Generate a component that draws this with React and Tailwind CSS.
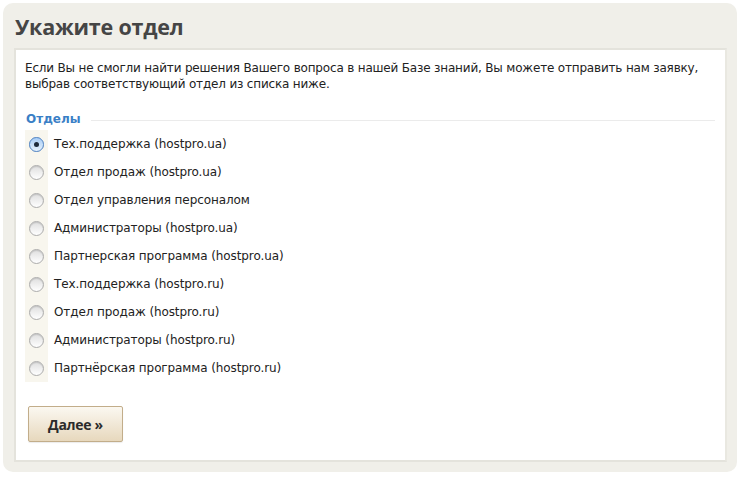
import React from "react";

const items = [
  "Тех.поддержка (hostpro.ua)",
  "Отдел продаж (hostpro.ua)",
  "Отдел управления персоналом",
  "Администраторы (hostpro.ua)",
  "Партнерская программа (hostpro.ua)",
  "Тех.поддержка (hostpro.ru)",
  "Отдел продаж (hostpro.ru)",
  "Администраторы (hostpro.ru)",
  "Партнёрская программа (hostpro.ru)",
];

function Radio({ checked }) {
  return (
    <span className="relative flex h-[15px] w-[15px] items-center justify-center rounded-full border border-[#acacac] bg-gradient-to-b from-[#dedede] to-[#ffffff] shadow-[inset_0_1px_1px_rgba(0,0,0,0.12)]">
      {checked && (
        <span className="absolute inset-[-1px] flex items-center justify-center rounded-full border border-[#5a8fd0] bg-gradient-to-b from-[#a9cdf5] to-[#e6f1fc]">
          <span className="h-[5px] w-[5px] rounded-full bg-[#1d2a3a]" />
        </span>
      )}
    </span>
  );
}

export default function App() {
  return (
    <div className="h-[478px] w-[744px] bg-white pl-[3px] pr-[7px] pt-[3px] font-['DejaVu_Sans',sans-serif]">
      <div className="h-[469px] rounded-[10px] bg-[#f0efe9] pl-[11px] pr-[10px] pt-[11px]">
        <h1 className="h-[34px] pl-[1px] font-['Open_Sans',sans-serif] text-[21.5px] font-bold leading-[26px] tracking-[-0.2px] text-[#454545]">
          Укажите отдел
        </h1>
        <div className="h-[414px] border-2 border-[#e4e3dc] border-r-[#e9e8e1] bg-white pl-[9px] pr-[9px] pt-[10px]">
          <p className="text-[12px] leading-[16px] text-[#222] tracking-[-0.18px]">
            Если Вы не смогли найти решения Вашего вопроса в нашей Базе знаний, Вы можете отправить нам заявку,
            <br />
            выбрав соответствующий отдел из списка ниже.
          </p>
          <div className="mt-[19px] flex items-center">
            <span className="pl-[1px] text-[12px] font-bold leading-[16px] text-[#3a7fc6]">Отделы</span>
            <div className="ml-[10px] mr-[1px] mt-[2px] h-px flex-1 bg-[#ebebeb]" />
          </div>
          <ul className="mt-[3px]">
            {items.map((t, i) => (
              <li key={i} className="flex h-[28px] items-center">
                <div className="flex h-full w-[23px] items-center justify-center bg-[#f8f6ee]">
                  <Radio checked={i === 0} />
                </div>
                <span className="ml-[6px] text-[12px] text-[#222] tracking-[-0.1px]">{t}</span>
              </li>
            ))}
          </ul>
          <button className="ml-[3px] mt-[24px] flex h-[36px] w-[95px] items-center justify-center rounded-[2px] border border-[#c2ad8a] bg-gradient-to-b from-[#fbf8f1] to-[#e7d8bd] font-['Open_Sans',sans-serif] text-[14px] font-bold tracking-[-0.3px] text-[#2b2b2b] shadow-[0_1px_1px_rgba(0,0,0,0.08)]">
            Далее »
          </button>
        </div>
      </div>
    </div>
  );
}
